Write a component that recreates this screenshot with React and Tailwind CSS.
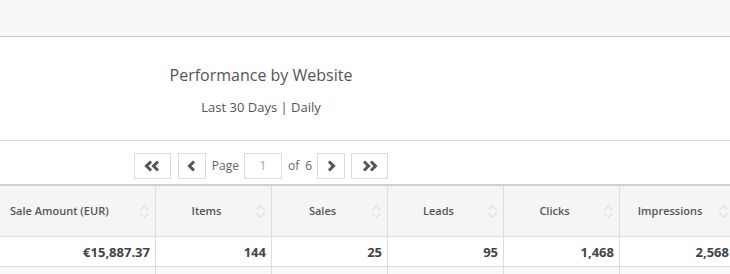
import React from 'react';

const font = { fontFamily: '"Open Sans", "Liberation Sans", sans-serif' };

const Chevron = ({ dir = 'left', double = false }) => {
  const one = dir === 'left' ? 'M7 1.5 L2.5 6 L7 10.5' : 'M3 1.5 L7.5 6 L3 10.5';
  const two = dir === 'left' ? 'M14 1.5 L9.5 6 L14 10.5' : 'M10 1.5 L14.5 6 L10 10.5';
  return (
    <svg width={double ? 17 : 10} height="12" viewBox={double ? '0 0 17 12' : '0 0 10 12'} fill="none">
      <path d={one} stroke="#555" strokeWidth="3" strokeLinejoin="miter" />
      {double && <path d={two} stroke="#555" strokeWidth="3" strokeLinejoin="miter" />}
    </svg>
  );
};

const SortIcon = () => (
  <svg width="11" height="15" viewBox="0 0 11 15" fill="none">
    <path d="M1.5 6 L5.5 1.5 L9.5 6" stroke="#d4d4d4" strokeWidth="1" />
    <path d="M1.5 9 L5.5 13.5 L9.5 9" stroke="#d4d4d4" strokeWidth="1" />
  </svg>
);

const columns = [
  { label: 'Sale Amount (EUR)', value: '€15,887.37', width: 'w-[156px]', first: true },
  { label: 'Items', value: '144', width: 'w-[116px]' },
  { label: 'Sales', value: '25', width: 'w-[116px]' },
  { label: 'Leads', value: '95', width: 'w-[116px]' },
  { label: 'Clicks', value: '1,468', width: 'w-[116px]' },
  { label: 'Impressions', value: '2,568', width: 'w-[114px]' },
];

export default function App() {
  return (
    <div className="w-[730px] h-[274px] overflow-hidden bg-white" style={font}>
      {/* top bar */}
      <div className="h-[37px] bg-[#f8f8f8] border-b border-[#c9c9c9]" />

      {/* title */}
      <div className="h-[104px] border-b border-[#dcdcdc]">
        <div className="w-[522px] flex flex-col items-center pt-[27px]">
          <div className="text-[16px] leading-[22px] text-[#555]">Performance by Website</div>
          <div className="text-[13px] leading-[18px] text-[#555] mt-[12px]">Last 30 Days | Daily</div>
        </div>
      </div>

      {/* pagination */}
      <div className="h-[43px]">
        <div className="w-[522px] flex justify-center items-center pt-[12px] text-[12px] text-[#666]">
          <button className="w-[37px] h-[26px] border border-[#dcdcdc] bg-white flex items-center justify-center">
            <Chevron dir="left" double />
          </button>
          <button className="ml-[7px] w-[28px] h-[26px] border border-[#dcdcdc] bg-white flex items-center justify-center">
            <Chevron dir="left" />
          </button>
          <span className="ml-[6px]">Page</span>
          <div className="ml-[5px] w-[38px] h-[26px] border border-[#dcdcdc] flex items-center justify-center text-[#a8a8a8]">1</div>
          <span className="ml-[6px]">of</span>
          <span className="ml-[6px]">6</span>
          <button className="ml-[5px] w-[28px] h-[26px] border border-[#dcdcdc] bg-white flex items-center justify-center">
            <Chevron dir="right" />
          </button>
          <button className="ml-[6px] w-[37px] h-[26px] border border-[#dcdcdc] bg-white flex items-center justify-center">
            <Chevron dir="right" double />
          </button>
        </div>
      </div>

      {/* table */}
      <div className="border-t-2 border-[#cfcfcf] flex">
        {columns.map((c, i) => (
          <div
            key={c.label}
            className={`${c.width} shrink-0 ${i < columns.length - 1 ? 'border-r border-[#dcdcdc]' : ''}`}
          >
            <div className="h-[51px] bg-[#f5f5f5] border-b border-[#dcdcdc] flex items-center pt-[1px] pr-[5px] text-[11px] font-semibold text-[#555]">
              {c.first ? (
                <span className="flex-1 pl-[10px]">{c.label}</span>
              ) : (
                <span className="flex-1 text-center pl-[2px]">{c.label}</span>
              )}
              <SortIcon />
            </div>
            <div className="h-[30px] border-b border-[#dcdcdc] flex items-center justify-end pt-[3px] pr-[5px] text-[13px] font-bold text-[#444]">
              {c.value}
            </div>
            <div className="h-[10px] bg-[#f9f9f9]" />
          </div>
        ))}
      </div>
    </div>
  );
}
